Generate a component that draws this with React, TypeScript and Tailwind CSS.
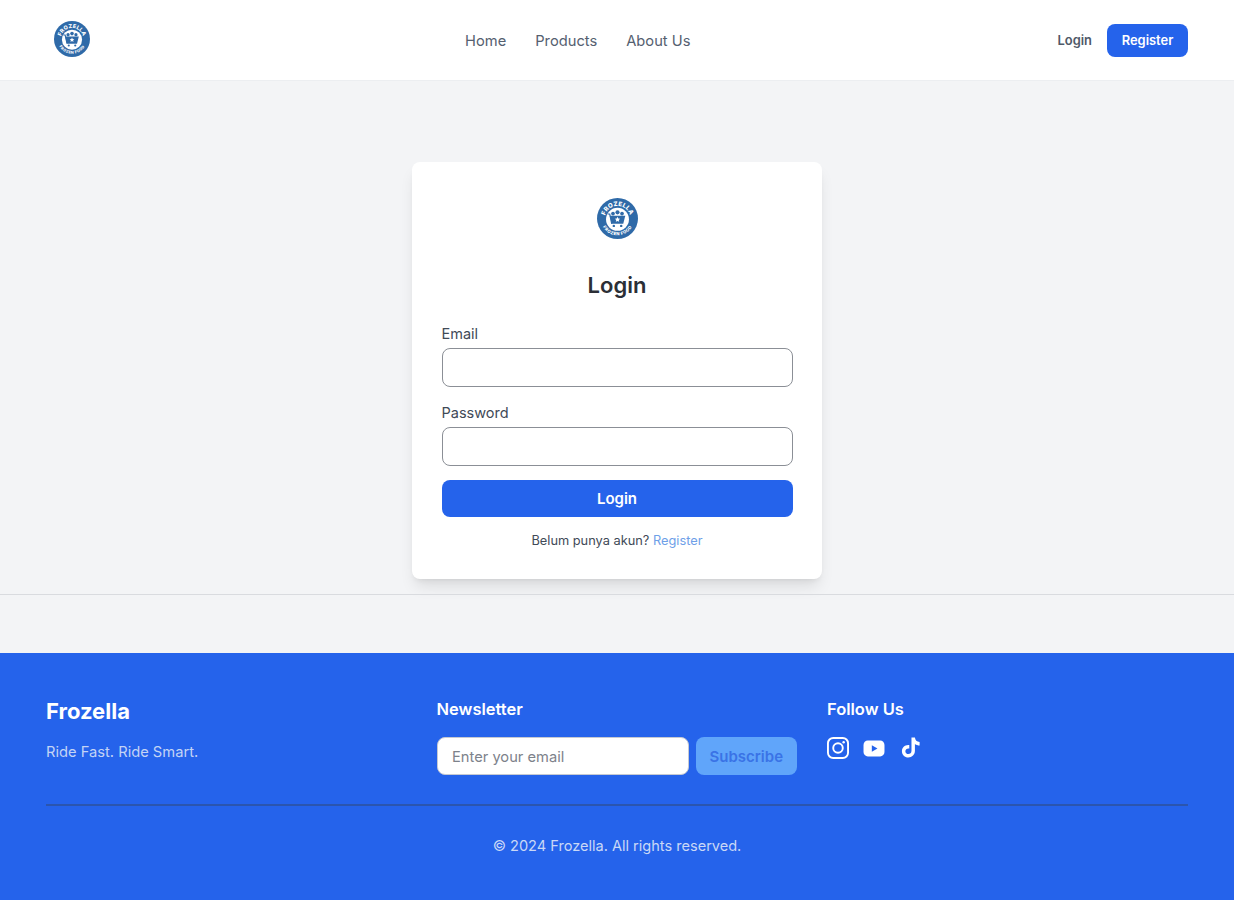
import { useState } from 'react'

function Logo({ size, id }: { size: number; id: string }) {
  return (
    <svg width={size} height={size} viewBox="0 0 100 100">
      <defs>
        <path id={`${id}-top`} d="M 19 50 A 31 31 0 0 1 81 50" />
        <path id={`${id}-bottom`} d="M 9 50 A 41 41 0 0 0 91 50" />
      </defs>
      <circle cx="50" cy="50" r="50" fill="#2f6aa8" />
      <circle cx="50" cy="52" r="28" fill="#ffffff" />
      <text fontFamily="Inter, sans-serif" fontSize="15" fontWeight="800" fill="#ffffff" letterSpacing="0.5">
        <textPath href={`#${id}-top`} startOffset="50%" textAnchor="middle">FROZELLA</textPath>
      </text>
      <text fontFamily="Inter, sans-serif" fontSize="10.500" fontWeight="800" fill="#ffffff" letterSpacing="1">
        <textPath href={`#${id}-bottom`} startOffset="50%" textAnchor="middle">FROZEN FOOD</textPath>
      </text>
      {/* cart */}
      <path d="M31 43h38l-5 20H36z" fill="#2f6aa8" />
      <path d="M26 39h5l5 24" fill="none" stroke="#2f6aa8" strokeWidth="3" />
      <path d="M50 46l2 4 4.500.5-3.300 3 .9 4.500-4.100-2.200-4.100 2.200.9-4.500-3.300-3 4.500-.5z" fill="#ffffff" />
      <circle cx="39" cy="38" r="4.500" fill="#2f6aa8" />
      <circle cx="50" cy="35" r="5" fill="#2f6aa8" />
      <circle cx="61" cy="38" r="4.500" fill="#2f6aa8" />
      <circle cx="41" cy="68" r="3" fill="#2f6aa8" />
      <circle cx="59" cy="68" r="3" fill="#2f6aa8" />
    </svg>
  )
}

function Instagram() {
  return (
    <svg width="22" height="22" viewBox="0 0 23 23" fill="none" stroke="#ffffff" strokeWidth="2">
      <rect x="1" y="1" width="21" height="21" rx="5.500" />
      <circle cx="11.500" cy="11.500" r="5" />
      <circle cx="17.400" cy="5.600" r="1.300" fill="#ffffff" stroke="none" />
    </svg>
  )
}

function Youtube() {
  return (
    <svg width="22" height="17" viewBox="0 0 23 18">
      <path
        fillRule="evenodd"
        fill="#ffffff"
        d="M5 .6h13c2.600 0 4.600 2 4.600 4.600v7.600c0 2.600-2 4.600-4.600 4.600H5c-2.600 0-4.600-2-4.600-4.600V5.200C.4 2.600 2.400.6 5 .6zM9.200 5.500v7l6-3.500z"
      />
    </svg>
  )
}

function Tiktok() {
  return (
    <svg width="20" height="22" viewBox="0 0 20 23">
      <path
        fill="#ffffff"
        d="M10.500 .5h3.600c.3 2.700 1.900 4.500 4.900 4.800v3.500c-1.900 0-3.500-.6-4.900-1.600v7.300c0 4.100-3 7-6.900 7-3.800 0-6.700-3-6.700-6.600 0-4 3.400-7.100 7.700-6.500v3.700c-2.200-.5-4.100.9-4.100 2.800 0 1.700 1.400 3 3.100 3 1.900 0 3.300-1.300 3.300-3.500z"
      />
    </svg>
  )
}

export default function App() {
  const [email, setEmail] = useState('')
  const [password, setPassword] = useState('')

  return (
    <div className="min-h-screen bg-[#f3f4f6] font-['Inter',sans-serif] text-[#1f2937]">
      {/* Navbar */}
      <header className="h-[81px] bg-white border-b border-[#eceef1] px-[46px] flex items-center justify-between">
        <div className="w-[51px] flex justify-center pb-[3px] pl-[1px]">
          <Logo size={36} id="nav-logo" />
        </div>
        <nav className="flex items-center gap-[29px] pt-[2px] ml-[1px] text-[14.700px] text-[#556070]">
          <a>Home</a>
          <a>Products</a>
          <a>About Us</a>
        </nav>
        <div className="flex items-center gap-[15px] pt-[1px] text-[12.900px] font-semibold">
          <a className="text-[#4f5968]">Login</a>
          <a className="h-[33px] w-[81px] -mt-[1px] pt-[1px] rounded-lg bg-[#2563eb] text-white flex items-center justify-center">Register</a>
        </div>
      </header>

      {/* Login */}
      <main className="pt-[81px]">
        <div className="w-[410px] h-[417px] mx-auto bg-white rounded-lg shadow-lg px-[29.500px] pt-[36px]">
          <div className="flex justify-center">
            <Logo size={41} id="card-logo" />
          </div>
          <h1 className="mt-[31px] text-[22px] leading-[30px] font-semibold text-center text-[#2b2f36]">Login</h1>
          <form className="mt-[24px]">
            <label className="block text-[14.500px] leading-[20px] text-[#414a57]">Email</label>
            <input
              value={email}
              onChange={(e) => setEmail(e.target.value)}
              className="mt-[4px] block w-full h-[39px] rounded-lg border border-[#8b8f96] bg-white"
            />
            <label className="block mt-[16px] text-[14.500px] leading-[20px] text-[#414a57]">Password</label>
            <input
              type="password"
              value={password}
              onChange={(e) => setPassword(e.target.value)}
              className="mt-[4px] block w-full h-[39px] rounded-lg border border-[#8b8f96] bg-white"
            />
            <button type="button" className="mt-[14px] w-full h-[37px] pt-[2px] rounded-lg bg-[#2563eb] text-white text-[15px] font-semibold">
              Login
            </button>
          </form>
          <p className="mt-[14px] text-[12.800px] leading-[20px] text-center text-[#414a57]">
            Belum punya akun? <a className="text-[#6ea0e8]">Register</a>
          </p>
        </div>
        <hr className="mt-[15px] border-[#d9dbdf]" />
      </main>

      {/* Footer */}
      <footer className="mt-[58px] h-[247px] bg-[#2563eb] px-[46px] pt-[44px] text-white">
        <div className="grid grid-cols-[360.500px_360.500px_1fr] gap-[30px] h-[109px] border-b-2 border-[#2b55ae]">
          <div>
            <h2 className="text-[22px] leading-[28px] font-bold">Frozella</h2>
            <p className="mt-[15px] text-[14.700px] leading-[24px] text-[#c3d4f5]">Ride Fast. Ride Smart.</p>
          </div>
          <div>
            <h3 className="text-[16.500px] leading-[24px] font-semibold">Newsletter</h3>
            <div className="mt-[16px] flex gap-[7px]">
              <input
                placeholder="Enter your email"
                className="w-[252px] h-[38px] rounded-lg bg-white px-[14.500px] pt-[1px] text-[14.700px] text-[#374151] placeholder:text-[#7d828b] border border-[#c5c9d2]"
              />
              <button type="button" className="flex-1 h-[38px] pt-[2px] rounded-lg bg-[#60a5fa] text-[#3a73e6] text-[15px] font-semibold">
                Subscribe
              </button>
            </div>
          </div>
          <div>
            <h3 className="text-[16.500px] leading-[24px] font-semibold">Follow Us</h3>
            <div className="mt-[16px] flex items-center gap-[14px]">
              <Instagram />
              <Youtube />
              <div className="ml-[2px] flex">
                <Tiktok />
              </div>
            </div>
          </div>
        </div>
        <p className="mt-[29px] text-[14.550px] leading-[22px] text-center text-[#c9d8f6]">© 2024 Frozella. All rights reserved.</p>
      </footer>
    </div>
  )
}
